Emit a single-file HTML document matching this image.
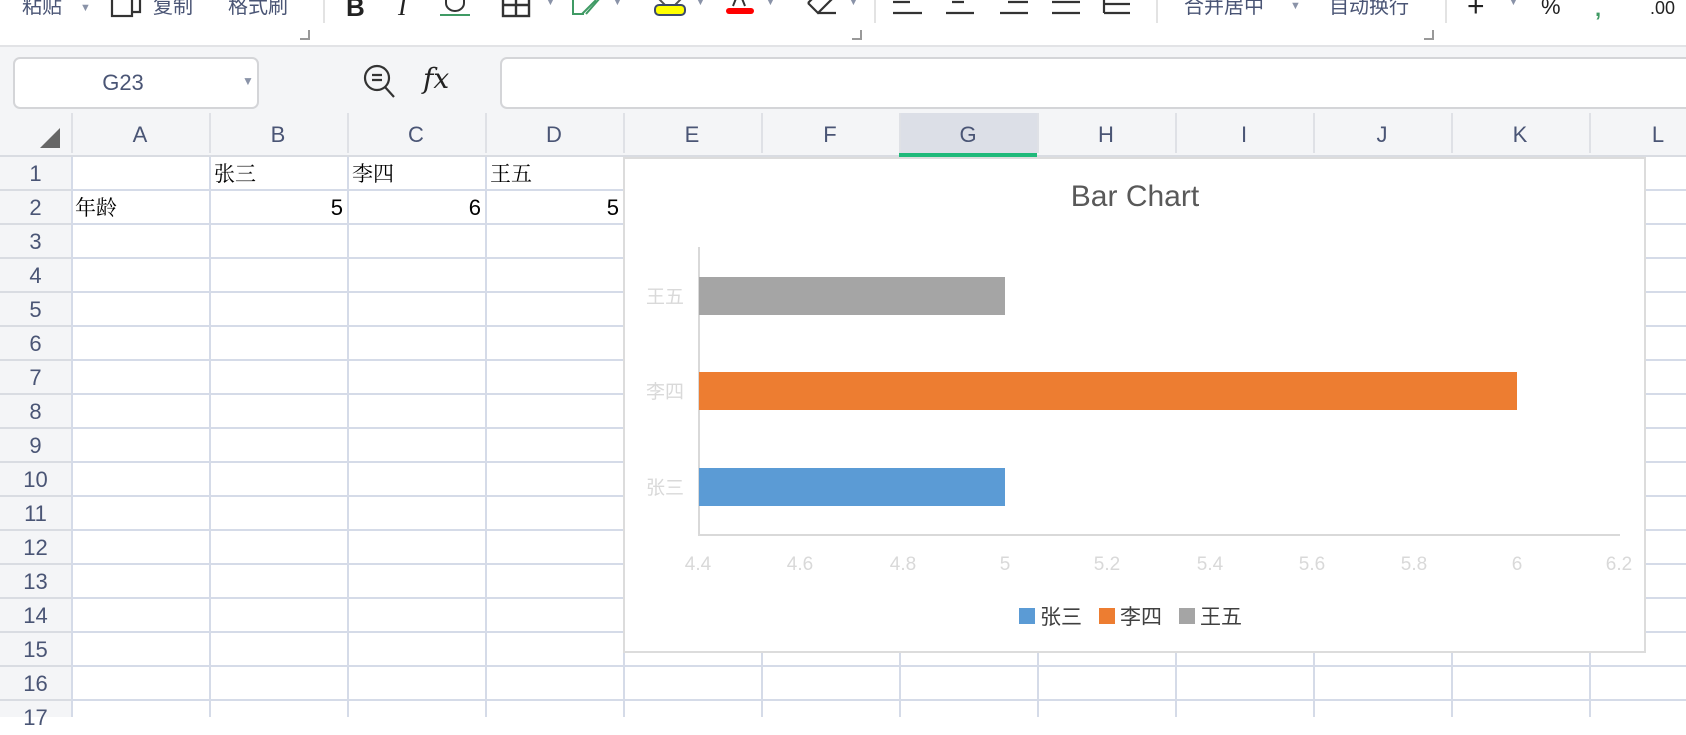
<!DOCTYPE html>
<html><head><meta charset="utf-8"><style>
*{margin:0;padding:0;box-sizing:border-box}
body{width:1686px;height:716px;overflow:hidden;background:#fff;position:relative;font-family:"Liberation Sans","Noto Sans CJK SC",sans-serif}
.a{position:absolute;white-space:nowrap}
.tb{color:#4a5575;font-size:20px;font-family:"Liberation Sans","Noto Sans CJK SC",sans-serif;top:-7px;line-height:28px}
.tri{color:#8a93a8;font-size:11px}
.col{position:absolute;top:113px;height:44px;line-height:44px;text-align:center;color:#4a5575;font-size:22px;width:138px}
.rn{position:absolute;left:0;width:71px;text-align:center;color:#4a5575;font-size:22px;height:34px;line-height:34px}
.ct{position:absolute;font-family:"Liberation Serif","Noto Serif CJK SC",serif;font-size:21px;color:#000;line-height:34px;height:34px}
.num{position:absolute;font-size:22px;color:#000;line-height:34px;height:34px;text-align:right;width:130px}
</style></head><body>
<div class="a" style="left:0;top:0;width:1686px;height:45px;background:#fff"></div>
<div class="a tb" style="left:22px">粘贴</div><div class="a tri" style="left:80px;top:2px">▼</div>
<svg class="a" style="left:110px;top:0" width="34" height="20"><rect x="2" y="-6" width="20" height="22" fill="none" stroke="#333" stroke-width="2.2"/><path d="M12 -4 H30 V12 H22" fill="none" stroke="#333" stroke-width="2.2"/></svg>
<div class="a tb" style="left:153px">复制</div>
<div class="a tb" style="left:228px">格式刷</div>
<div class="a" style="left:323px;top:0;width:2px;height:23px;background:#e3e3e3"></div>
<div class="a" style="left:300px;top:30px;width:10px;height:10px;border-right:2px solid #999;border-bottom:2px solid #999"></div>
<div class="a" style="left:346px;top:-8px;font-size:26px;font-weight:bold;color:#222">B</div>
<div class="a" style="left:398px;top:-8px;font-size:26px;font-style:italic;font-family:'Liberation Serif',serif;color:#222">I</div>
<svg class="a" style="left:438px;top:0" width="36" height="18"><path d="M8 0 V3 A9 8 0 0 0 26 3 V0" fill="none" stroke="#333" stroke-width="2"/><rect x="2" y="14" width="30" height="2" fill="#3f9a64"/></svg>
<svg class="a" style="left:500px;top:0" width="44" height="18"><rect x="3" y="-4" width="26" height="20" fill="none" stroke="#333" stroke-width="2.4"/><path d="M16 -4 V16 M3 5 H29" stroke="#333" stroke-width="2.4"/></svg><div class="a tri" style="left:545px;top:-4px">▼</div>
<svg class="a" style="left:570px;top:0" width="40" height="18"><path d="M3 0 V14 H14 M26 0 L12 14" fill="none" stroke="#3f9a64" stroke-width="2"/><path d="M30 -2 L16 14" stroke="#3f9a64" stroke-width="2"/></svg><div class="a tri" style="left:612px;top:-4px">▼</div>
<svg class="a" style="left:652px;top:0" width="36" height="18"><path d="M6 -2 L14 6 H22 L30 -2" fill="none" stroke="#555" stroke-width="2"/><rect x="3" y="5" width="30" height="10" rx="4" fill="#ffff00" stroke="#3c4a6b" stroke-width="2"/></svg><div class="a tri" style="left:695px;top:-4px">▼</div>
<svg class="a" style="left:724px;top:0" width="34" height="18"><path d="M9 6 L13 -4 M21 6 L17 -4" stroke="#333" stroke-width="2"/><rect x="2" y="8" width="28" height="6" rx="3" fill="#f00"/></svg><div class="a tri" style="left:765px;top:-4px">▼</div>
<svg class="a" style="left:804px;top:0" width="36" height="18"><path d="M4 3 L14 13 L28 -1 M14 13 H32" fill="none" stroke="#333" stroke-width="2.2"/><path d="M4 3 L10 -3" stroke="#333" stroke-width="2.2"/></svg><div class="a tri" style="left:848px;top:-4px">▼</div>
<div class="a" style="left:852px;top:30px;width:10px;height:10px;border-right:2px solid #999;border-bottom:2px solid #999"></div>
<div class="a" style="left:874px;top:0;width:2px;height:23px;background:#e3e3e3"></div>
<svg class="a" style="left:890px;top:0" width="240" height="18"><g stroke="#333" stroke-width="2.2"><path d="M3 2 H20 M3 13 H32"/><path d="M62 2 H74 M56 13 H84"/><path d="M118 2 H138 M110 13 H138"/><path d="M162 2 H190 M162 13 H190"/><path d="M214 -2 V13 M214 4 H240 M214 13 H240"/></g></svg>
<div class="a" style="left:1156px;top:0;width:2px;height:23px;background:#e3e3e3"></div>
<div class="a tb" style="left:1184px">合并居中</div><div class="a tri" style="left:1290px;top:0">▼</div>
<div class="a tb" style="left:1329px">自动换行</div>
<div class="a" style="left:1424px;top:30px;width:10px;height:10px;border-right:2px solid #999;border-bottom:2px solid #999"></div>
<div class="a" style="left:1445px;top:0;width:2px;height:23px;background:#e3e3e3"></div>
<div class="a" style="left:1467px;top:-10px;font-size:30px;color:#222">+</div><div class="a tri" style="left:1508px;top:-4px">▼</div>
<div class="a" style="left:1541px;top:-6px;font-size:22px;color:#222">%</div>
<div class="a" style="left:1595px;top:-4px;font-size:22px;color:#3f9a64;font-weight:bold">,</div>
<div class="a" style="left:1650px;top:-2px;font-size:18px;color:#222">.00</div>
<div class="a" style="left:0;top:45px;width:1686px;height:2px;background:#e2e3e6"></div>
<div class="a" style="left:0;top:47px;width:1686px;height:66px;background:#f4f5f7"></div>
<div class="a" style="left:13px;top:57px;width:246px;height:52px;background:#fff;border:2px solid #d4d5d8;border-radius:7px"></div>
<div class="a" style="left:13px;top:57px;width:220px;height:52px;line-height:52px;text-align:center;color:#4a5575;font-size:22px">G23</div>
<div class="a tri" style="left:242px;top:74px;font-size:12px">▼</div>
<svg class="a" style="left:360px;top:60px" width="40" height="40"><circle cx="17" cy="18" r="12" fill="none" stroke="#333" stroke-width="2.2"/><path d="M12 15 H22 M12 20 H22 M25 27 L34 37" stroke="#333" stroke-width="2.2"/></svg>
<div class="a" style="left:423px;top:62px;font-size:28px;font-style:italic;font-family:'DejaVu Serif','Liberation Serif',serif;color:#222">fx</div>
<div class="a" style="left:500px;top:57px;width:1200px;height:52px;background:#fff;border:2px solid #d4d5d8;border-radius:7px"></div>
<div class="a" style="left:0;top:113px;width:1686px;height:44px;background:#f4f5f7;border-bottom:2px solid #d9dce2"></div>
<div class="a" style="left:0;top:157px;width:71px;height:560px;background:#f4f5f7;background-image:repeating-linear-gradient(to bottom,transparent 0,transparent 32px,#d9dce2 32px,#d9dce2 34px)"></div>
<div class="a" style="left:71px;top:157px;width:1620px;height:560px;background-image:repeating-linear-gradient(to bottom,transparent 0,transparent 32px,#d5dbe8 32px,#d5dbe8 34px),repeating-linear-gradient(to right,#d5dbe8 0,#d5dbe8 2px,transparent 2px,transparent 138px)"></div>
<div class="a" style="left:899px;top:113px;width:138px;height:44px;background:#dcdfe7"></div>
<div class="a" style="left:899px;top:153px;width:138px;height:4px;background:#1fb97a"></div>
<div class="a" style="left:71px;top:113px;width:1620px;height:40px;background-image:repeating-linear-gradient(to right,#dfe1e6 0,#dfe1e6 2px,transparent 2px,transparent 138px)"></div>
<svg class="a" style="left:38px;top:126px" width="24" height="24"><path d="M22 2 V22 H2 Z" fill="#666"/></svg>
<div class="col" style="left:71px">A</div><div class="col" style="left:209px">B</div><div class="col" style="left:347px">C</div><div class="col" style="left:485px">D</div><div class="col" style="left:623px">E</div><div class="col" style="left:761px">F</div><div class="col" style="left:899px">G</div><div class="col" style="left:1037px">H</div><div class="col" style="left:1175px">I</div><div class="col" style="left:1313px">J</div><div class="col" style="left:1451px">K</div><div class="col" style="left:1589px">L</div>
<div class="rn" style="top:157px">1</div><div class="rn" style="top:191px">2</div><div class="rn" style="top:225px">3</div><div class="rn" style="top:259px">4</div><div class="rn" style="top:293px">5</div><div class="rn" style="top:327px">6</div><div class="rn" style="top:361px">7</div><div class="rn" style="top:395px">8</div><div class="rn" style="top:429px">9</div><div class="rn" style="top:463px">10</div><div class="rn" style="top:497px">11</div><div class="rn" style="top:531px">12</div><div class="rn" style="top:565px">13</div><div class="rn" style="top:599px">14</div><div class="rn" style="top:633px">15</div><div class="rn" style="top:667px">16</div><div class="rn" style="top:701px">17</div>
<div class="ct" style="left:214px;top:157px">张三</div><div class="ct" style="left:352px;top:157px">李四</div><div class="ct" style="left:490px;top:157px">王五</div>
<div class="ct" style="left:75px;top:191px">年龄</div>
<div class="num" style="left:211px;top:191px;width:132px">5</div><div class="num" style="left:349px;top:191px;width:132px">6</div><div class="num" style="left:487px;top:191px;width:132px">5</div>
<div class="a" style="left:623px;top:157px;width:1023px;height:496px;background:#fff;border:2px solid #dcdcdc"></div>
<svg class="a" style="left:0;top:0" width="1686" height="716">
<text x="1135" y="206" text-anchor="middle" font-family="Liberation Sans,sans-serif" font-size="30" fill="#595959">Bar Chart</text>
<line x1="699" y1="247" x2="699" y2="535" stroke="#d9d9d9" stroke-width="2"/>
<line x1="698" y1="535" x2="1620" y2="535" stroke="#d9d9d9" stroke-width="2"/>
<rect x="699" y="277" width="306" height="38" fill="#a5a5a5"/>
<rect x="699" y="372" width="818" height="38" fill="#ed7d31"/>
<rect x="699" y="468" width="306" height="38" fill="#5b9bd5"/>
<g font-family="Liberation Sans,Noto Sans CJK SC,sans-serif" font-size="19" fill="#d9d9d9" text-anchor="end">
<text x="684" y="303">王五</text><text x="684" y="398">李四</text><text x="684" y="494">张三</text></g>
<g font-family="Liberation Sans,sans-serif" font-size="19" fill="#d9d9d9" text-anchor="middle">
<text x="698" y="570">4.4</text><text x="800" y="570">4.6</text><text x="903" y="570">4.8</text><text x="1005" y="570">5</text><text x="1107" y="570">5.2</text><text x="1210" y="570">5.4</text><text x="1312" y="570">5.6</text><text x="1414" y="570">5.8</text><text x="1517" y="570">6</text><text x="1619" y="570">6.2</text></g>
<rect x="1019" y="608" width="16" height="16" fill="#5b9bd5"/><rect x="1099" y="608" width="16" height="16" fill="#ed7d31"/><rect x="1179" y="608" width="16" height="16" fill="#a5a5a5"/>
<g font-family="Liberation Sans,Noto Sans CJK SC,sans-serif" font-size="21" fill="#404040">
<text x="1040" y="624">张三</text><text x="1120" y="624">李四</text><text x="1200" y="624">王五</text></g>
</svg>
</body></html>
